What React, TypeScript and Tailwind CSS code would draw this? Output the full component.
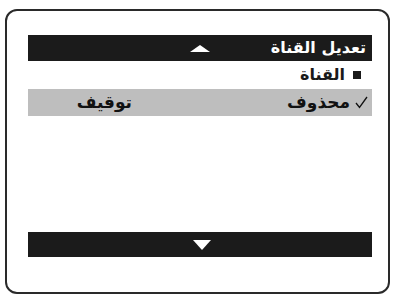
const App = () => {
  return (
    <div className="w-[395px] h-[295px] bg-white pl-[5px] pt-[9px] pr-[5px]" style={{ fontFamily: '"DejaVu Sans", sans-serif' }}>
      <div className="h-[285px] border-2 border-[#2a2a2a] rounded-[12px] pl-[21px] pr-[16px] pt-[24px]">
        <div dir="rtl" className="flex flex-col">
          <div className="h-[26px] bg-[#1b1b1b] grid grid-cols-3 items-center text-white">
            <span className="pr-[6px] text-[16px] font-bold leading-none whitespace-nowrap">تعديل القناة</span>
            <div className="flex justify-center">
              <div className="w-0 h-0 border-l-[10px] border-r-[10px] border-b-[7px] border-l-transparent border-r-transparent border-b-white"></div>
            </div>
            <span></span>
          </div>
          <div className="h-[28px] flex items-center gap-[8px] pr-[11px] text-[16px] font-bold text-[#1a1a1a]">
            <span className="w-[8px] h-[8px] bg-[#1a1a1a]"></span>
            <span>القناة</span>
          </div>
          <div className="h-[27px] bg-[#bebebe] flex items-center text-[17px] font-bold text-[#111]">
            <div className="w-[240px] flex items-center gap-[5px] pr-[4px]">
              <svg width="13" height="13" viewBox="0 0 13 13" className="shrink-0">
                <path d="M1 7 L4.5 11.5 L12 1" fill="none" stroke="#111" strokeWidth="1.3" />
              </svg>
              <span>محذوف</span>
            </div>
            <span>توقيف</span>
          </div>
          <div className="h-[116px]"></div>
          <div className="h-[25px] bg-[#1b1b1b] flex items-center justify-center pl-[4px]">
            <div className="w-0 h-0 border-l-[9px] border-r-[9px] border-t-[10px] border-l-transparent border-r-transparent border-t-white"></div>
          </div>
        </div>
      </div>
    </div>
  );
};

export default App;
